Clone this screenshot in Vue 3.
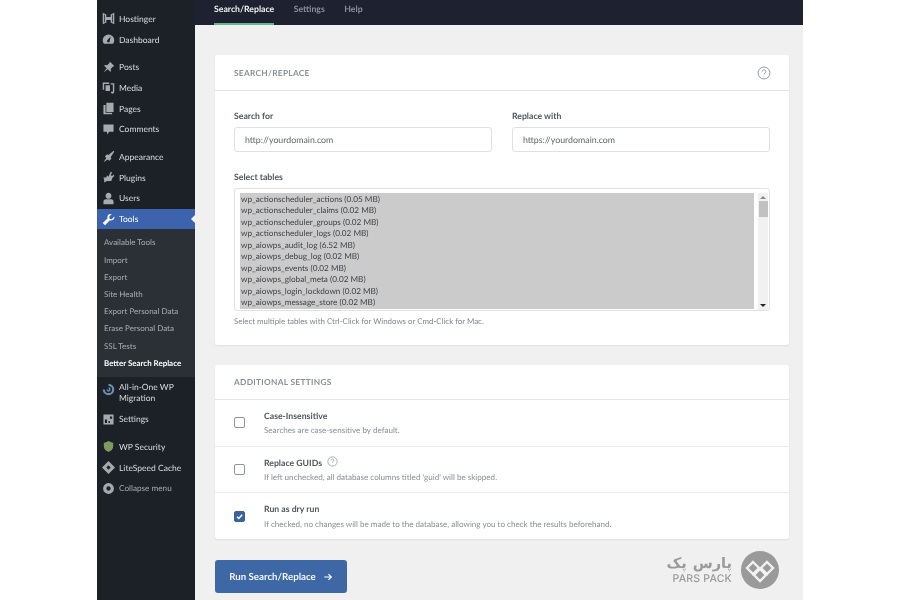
<script setup>
const menuB = [
  { t: 'Posts', i: 'M11 1l6 6-2 1-3 3 .5 3-1 1-3.500-3.500L2 16l4.500-6L3 6.500l1-1 3 .5 3-3z' },
  { t: 'Media', i: 'M1 2h9v2H3v8H1zM5 6h6v8H5zM12 3h5v12a2.500 2.500 0 0 1-5 0h3V5h-3z' },
  { t: 'Pages', i: 'M6 1h10v13H6zM2 4h3v11h9v2H2z' },
  { t: 'Comments', i: 'M2 2h14v10h-6l-3 4v-4H2z' },
]
const menuC = [
  { t: 'Appearance', i: 'M16 1l1 1-5 8 1 2-3 3-2-2-6 4 4-6-2-2 3-3 2 1z' },
  { t: 'Plugins', i: 'M12 1l2 1-2 4 2 1 2-2 1 2-3 3-1 4H7l-4 2v-4L2 9h4l1-3 2 2z' },
  { t: 'Users', i: 'M9 1a4 4 0 0 1 4 4.500C13 8 11.200 9.500 9 9.500S5 8 5 5.500A4 4 0 0 1 9 1zM2 17v-4c0-2 2-3 3-3h8c1 0 3 1 3 3v4z' },
]
const subs = ['Available Tools','Import','Export','Site Health','Export Personal Data','Erase Personal Data','SSL Tests','Better Search Replace']
const tables = [
  'wp_actionscheduler_actions (0.05 MB)','wp_actionscheduler_claims (0.02 MB)','wp_actionscheduler_groups (0.02 MB)',
  'wp_actionscheduler_logs (0.02 MB)','wp_aiowps_audit_log (6.52 MB)','wp_aiowps_debug_log (0.02 MB)',
  'wp_aiowps_events (0.02 MB)','wp_aiowps_global_meta (0.02 MB)','wp_aiowps_login_lockdown (0.02 MB)','wp_aiowps_message_store (0.02 MB)'
]
</script>

<template>
  <div class="page">
    <div class="frame">
      <aside class="side">
        <div class="group first">
          <div class="item">
            <svg class="ico" viewBox="0 0 18 18"><path fill-rule="evenodd" d="M1 1l5 2.500V7h6V3.500L17 1v16l-5-2.500V11H6v3.500L1 17zM3 4v10l1 .5v-11zM14 3.500v11l1-.5V4z"/></svg><span>Hostinger</span>
          </div>
          <div class="item">
            <svg class="ico" viewBox="0 0 18 18"><path fill-rule="evenodd" d="M9 2a8 8 0 0 0-8 8c0 2 .8 4 2 5h12c1.200-1 2-3 2-5a8 8 0 0 0-8-8zm0 11a2 2 0 0 1-1.700-3L12 5l-1.500 7a2 2 0 0 1-1.500 1z"/></svg><span>Dashboard</span>
          </div>
        </div>
        <div class="group">
          <div v-for="m in menuB" :key="m.t" class="item">
            <svg class="ico" viewBox="0 0 18 18"><path :d="m.i"/></svg><span>{{ m.t }}</span>
          </div>
        </div>
        <div class="group">
          <div v-for="m in menuC" :key="m.t" class="item">
            <svg class="ico" viewBox="0 0 18 18"><path :d="m.i"/></svg><span>{{ m.t }}</span>
          </div>
          <div class="item active">
            <svg class="ico" viewBox="0 0 18 18"><path d="M17 5l-3.500 3.500-3-.5-.5-3L13.500 1.500C10.500.5 7.500 2.500 7.500 5.500c0 .6.100 1.200.3 1.700L1 13.800 4.200 17l6.800-6.800c3.500 1.200 7-2 6-5.200z"/></svg><span>Tools</span>
          </div>
          <div class="subs">
            <div v-for="(s, i) in subs" :key="s" class="sub" :class="{ cur: i === subs.length - 1 }">{{ s }}</div>
          </div>
        </div>
        <div class="item double">
          <svg class="ico blue" viewBox="0 0 18 18"><path fill-rule="evenodd" d="M9 1a8 8 0 1 1-8 8h3a5 5 0 1 0 5-5zM9 6a3 3 0 1 1-3 3h2a1 1 0 1 0 1-1z"/></svg><span>All-in-One WP Migration</span>
        </div>
        <div class="item">
          <svg class="ico" viewBox="0 0 18 18"><path fill-rule="evenodd" d="M2 2h14v14H2zM4 9v5h3V9zM9 11v3h2v-3zM11 5v3h3V5z"/></svg><span>Settings</span>
        </div>
        <div class="group">
          <div class="item">
            <svg class="ico green" viewBox="0 0 18 18"><path d="M9 1.500c2 1.200 4 2 6.500 2.200v5.300c0 3.500-3 6.500-6.500 7.500-3.500-1-6.500-4-6.500-7.500V3.700C5 3.500 7 2.700 9 1.500z"/></svg><span>WP Security</span>
          </div>
          <div class="item">
            <svg class="ico" viewBox="0 0 18 18"><path fill-rule="evenodd" d="M9 0l9 9-9 9-9-9zM9 6L6 9l3 3 3-3z"/></svg><span>LiteSpeed Cache</span>
          </div>
          <div class="item collapse">
            <svg class="ico" viewBox="0 0 18 18"><path fill-rule="evenodd" d="M9 1.500a7.500 7.500 0 1 1 0 15 7.500 7.500 0 0 1 0-15zM9 6a3 3 0 1 0 0 6 3 3 0 0 0 0-6z"/></svg><span>Collapse menu</span>
          </div>
        </div>
      </aside>

      <div class="main">
        <nav class="tabs">
          <span class="tab on">Search/Replace</span>
          <span class="tab">Settings</span>
          <span class="tab">Help</span>
        </nav>
        <div class="content">
          <section class="card">
            <header class="head">
              <h2>SEARCH/REPLACE</h2>
              <svg class="q big" viewBox="0 0 20 20"><circle cx="10" cy="10" r="8.500"/><path d="M7.500 8a2.500 2.500 0 1 1 3.800 2.100c-.9.600-1.300 1-1.300 2"/><circle class="dot" cx="10" cy="14.500" r=".6"/></svg>
            </header>
            <div class="body">
              <div class="fields">
                <label class="field"><b>Search for</b><div class="input">http://yourdomain.com</div></label>
                <label class="field"><b>Replace with</b><div class="input">https://yourdomain.com</div></label>
              </div>
              <b class="lbl">Select tables</b>
              <div class="list">
                <div class="opts">
                  <div v-for="t in tables" :key="t" class="opt">{{ t }}</div>
                </div>
                <div class="bar">
                  <i class="up"></i>
                  <i class="thumb"></i>
                  <i class="down"></i>
                </div>
              </div>
              <p class="hint">Select multiple tables with Ctrl-Click for Windows or Cmd-Click for Mac.</p>
            </div>
          </section>

          <section class="card second">
            <header class="head h2"><h2>ADDITIONAL SETTINGS</h2></header>
            <div class="row">
              <span class="box"></span>
              <div class="txt"><b>Case-Insensitive</b><small>Searches are case-sensitive by default.</small></div>
            </div>
            <div class="row">
              <span class="box"></span>
              <div class="txt">
                <b>Replace GUIDs
                  <svg class="q" viewBox="0 0 20 20"><circle cx="10" cy="10" r="8.500"/><path d="M7.500 8a2.500 2.500 0 1 1 3.800 2.100c-.9.600-1.300 1-1.300 2"/><circle class="dot" cx="10" cy="14.500" r=".6"/></svg>
                </b>
                <small>If left unchecked, all database columns titled 'guid' will be skipped.</small>
              </div>
            </div>
            <div class="row">
              <span class="box checked"><svg viewBox="0 0 11 11"><path d="M2.500 5.700l2.200 2.200 4-4.600"/></svg></span>
              <div class="txt"><b>Run as dry run</b><small>If checked, no changes will be made to the database, allowing you to check the results beforehand.</small></div>
            </div>
          </section>

          <div class="foot">
            <button class="run">Run Search/Replace
              <svg viewBox="0 0 12 12"><path d="M1.500 6h8.500M6.500 2.500L10 6l-3.500 3.500"/></svg>
            </button>
            <div class="brand">
              <div class="brand-text">
                <span class="fa">پارس پک</span>
                <span class="en">PARS PACK</span>
              </div>
              <svg class="mark" viewBox="0 0 38 38">
                <circle cx="19" cy="19" r="19" fill="#9a9a9a"/>
                <g fill="none" stroke="#f2f2f2" stroke-width="2.400">
                  <path d="M12 11l6 6-6 6-6-6z"/>
                  <path d="M26 11l6 6-6 6-6-6z"/>
                  <path d="M19 18l6 6-6 6-6-6z"/>
                </g>
              </svg>
            </div>
          </div>
        </div>
      </div>
    </div>
  </div>
</template>

<style>
html, body { margin: 0; background: #fff; }
</style>

<style scoped>
.page { width: 900px; height: 600px; display: flex; justify-content: center; overflow: hidden; background: #fff; font-family: Lato, "Open Sans", sans-serif; text-rendering: geometricPrecision; filter: blur(0.35px); }
.frame { width: 706px; height: 600px; display: flex; }
.side { width: 98px; flex: none; background: #1c2027; color: #d9dbde; padding-top: 8.500px; box-sizing: border-box; font-size: 8.500px; }
.group { margin-top: 7px; }
.group.first { margin-top: 0; }
.item { display: flex; align-items: center; height: 20.700px; padding-left: 5px; gap: 4px; position: relative; }
.ico { width: 13px; height: 13px; flex: none; fill: #a7aaad; }
.ico.blue { fill: #6f8fb0; }
.ico.green { fill: #7d9a62; }
.item.active { background: #3c63ae; color: #fff; }
.item.active .ico { fill: #fff; }
.item.active::after { content: ""; position: absolute; right: 0; top: 6px; border: 4.500px solid transparent; border-right-color: #f0f0f1; border-left: 0; }
.subs { background: #2b3037; padding: 5px 0; }
.sub { height: 17.200px; line-height: 17.200px; padding-left: 7px; font-size: 8px; color: #a9adb2; }
.sub.cur { color: #fff; font-weight: 700; font-size: 7.950px; }
.item.double { height: 32px; align-items: flex-start; padding-top: 5.500px; line-height: 11px; box-sizing: border-box; }
.item.double .ico { margin-top: 1px; }
.item.collapse { color: #a7aaad; font-size: 8.200px; }

.main { flex: 1; min-width: 0; background: #f0f0f1; display: flex; flex-direction: column; }
.tabs { height: 25px; background: #1e2130; display: flex; gap: 19.500px; padding-left: 19px; box-sizing: border-box; flex: none; }
.tab { font-size: 8.700px; color: #8d9196; font-weight: 700; line-height: 17px; height: 25px; box-sizing: border-box; }
.tab.on { color: #f0f0f1; border-bottom: 2px solid #5fb98a; }
.content { padding: 30px 14px 0 20px; display: flex; flex-direction: column; }
.card { background: #fff; border-radius: 3px; box-shadow: 0 1px 2px rgba(0,0,0,.07); height: 290px; }
.card.second { height: 174px; margin-top: 20px; }
.head { height: 36px; border-bottom: 1px solid #e2e4e7; display: flex; align-items: center; justify-content: space-between; padding: 0 19px; box-sizing: border-box; }
.head.h2 { height: 35px; }
h2 { margin: 0; font-size: 8.300px; font-weight: 700; letter-spacing: .3px; color: #8b9097; }
.q { width: 11px; height: 11px; fill: none; stroke: #7d8792; stroke-width: 1.200; vertical-align: -1.500px; margin-left: 2px; }
.q.big { width: 14px; height: 14px; margin: 0 -1px 0 0; }
.q .dot { fill: #7d8792; stroke: none; }
.body { padding: 19px 19px 0; }
.fields { display: flex; gap: 20px; }
.field { flex: 1; }
b { display: block; font-weight: 700; font-size: 8.700px; color: #50575e; line-height: 12px; }
.input { margin-top: 5px; height: 25px; border: 1px solid #dfe1e4; border-radius: 3px; box-sizing: border-box; font-size: 8.800px; color: #5e646b; line-height: 24px; padding-left: 10px; }
.lbl { margin-top: 19px; }
.list { margin-top: 5px; height: 123px; border: 1px solid #dfe1e4; border-radius: 3px; box-sizing: border-box; display: flex; padding: 4px 1px 1px 5px; overflow: hidden; }
.opts { width: 514px; height: 116px; background: #cbcbcb; flex: none; overflow: hidden; padding-top: 1px; box-sizing: border-box; }
.opt { font-size: 8.200px; line-height: 11.450px; color: #3d4147; padding-left: 1px; height: 11.450px; }
.bar { width: 11px; margin-left: 4px; background: #f1f1f1; display: flex; flex-direction: column; align-items: center; height: 117px; }
.bar i { display: block; }
.up { border: 3px solid transparent; border-bottom: 3.500px solid #8a8a8a; border-top: 0; margin-top: 3px; }
.thumb { width: 9px; height: 16px; background: #c1c1c1; margin-top: 2px; }
.down { border: 3px solid transparent; border-top: 3.500px solid #222; border-bottom: 0; margin-top: auto; margin-bottom: 3px; }
.hint { margin: 5px 0 0; font-size: 7.900px; color: #7f858c; line-height: 11px; }

.row { height: 46.500px; display: flex; align-items: center; border-bottom: 1px solid #ececee; box-sizing: border-box; padding-left: 19px; }
.row:last-child { border-bottom: 0; }
.box { width: 9px; height: 9px; border: 1px solid #8f949a; border-radius: 2px; flex: none; }
.box.checked { background: #3a62a0; border-color: #3a62a0; }
.box svg { display: block; width: 9px; height: 9px; fill: none; stroke: #fff; stroke-width: 1.800; }
.txt { margin-left: 19px; display: flex; flex-direction: column; gap: 3.500px; }
.txt b { font-size: 8.700px; }
.txt b .q { margin-left: 3px; }
small { font-size: 8.080px; color: #8a8f96; line-height: 11px; }

.foot { display: flex; justify-content: space-between; align-items: flex-start; margin-top: 21px; }
.run { width: 132px; height: 33px; border: 0; border-radius: 3px; background: #3d68a5; color: #f2f4f8; font: 700 9.700px Lato, sans-serif; text-rendering: geometricPrecision; display: flex; align-items: center; justify-content: center; gap: 7px; padding: 0; }
.run svg { width: 10px; height: 10px; fill: none; stroke: #fff; stroke-width: 1.400; }
.brand { display: flex; align-items: center; gap: 9px; margin-top: -9px; margin-right: 10px; }
.brand-text { display: flex; flex-direction: column; align-items: flex-end; color: #9a9a9a; line-height: 1; }
.fa { font-family: "DejaVu Sans", sans-serif; font-size: 14.500px; font-weight: 700; word-spacing: 1px; line-height: 17px; }
.en { font-family: "Inter", sans-serif; font-size: 10.500px; font-weight: 500; letter-spacing: .2px; line-height: 12px; }
.mark { width: 38px; height: 38px; flex: none; }
</style>
